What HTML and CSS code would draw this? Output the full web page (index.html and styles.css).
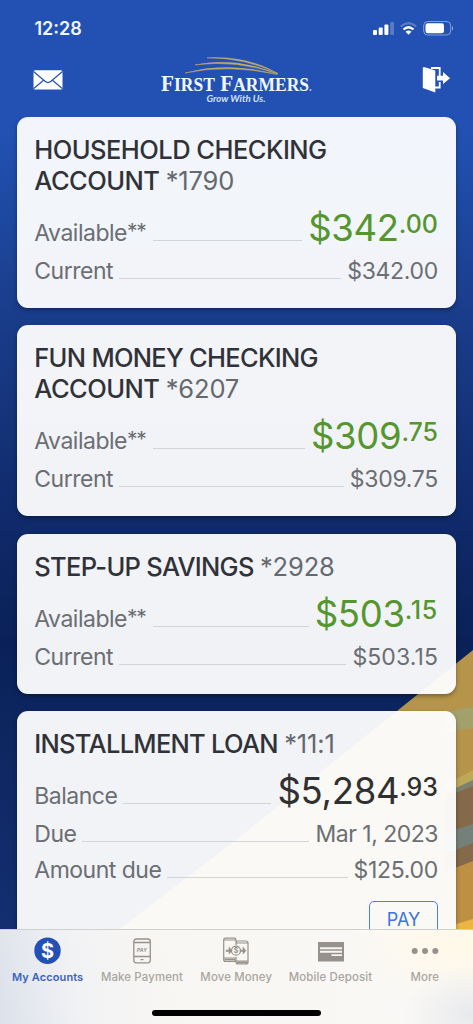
FILE: index.html
```html
<!DOCTYPE html>
<html lang="en">
<head>
<meta charset="utf-8">
<title>My Accounts</title>
<link rel="stylesheet" href="styles.css">
</head>
<body>
<div class="app">
  <svg class="backdrop" viewBox="0 0 473 929" aria-hidden="true">
    <path fill="#b6944a" d="M473 650L397 711L236 840L120 929H473Z"/>
    <path fill="#a2a16c" d="M445 713Q460 708 473 707V728Q460 729 445 732Z"/>
    <path fill="#84694a" d="M445 796Q460 788 473 783V862L445 872Z"/>
    <path fill="#7d8270" d="M445 791L473 776V786L445 797Z"/>
    <path fill="#bda858" d="M445 785L473 770V780L445 793Z"/>
    <path fill="#75807a" d="M445 833L473 824V843L445 854Z"/>
    <path fill="#bd9044" d="M445 872L473 861V929H445Z"/>
    <path fill="#ecb544" d="M440 929L473 919V929Z"/>
  </svg>

  <header class="status">
    <span class="clock">12:28</span>
    <svg class="signals" width="84" height="18" viewBox="0 0 84 18" fill="#fff">
      <rect x="1" y="10" width="4" height="5" rx="1"/>
      <rect x="6.700" y="7.500" width="4" height="7.500" rx="1"/>
      <rect x="12.400" y="4.500" width="4" height="10.500" rx="1"/>
      <rect x="18.200" y="2" width="3.800" height="13" rx="1" opacity=".25"/>
      <g fill="none" stroke="#fff" stroke-width="2.200">
        <path d="M28.700 6.500Q36.500-.3 44.300 6.500" opacity=".25"/>
        <path d="M31.500 9.500Q36.500 5 41.500 9.500"/>
      </g>
      <path d="M33.500 11.700Q36.500 9.500 39.500 11.700L36.500 14.800Z"/>
      <rect x="51.700" y="1.500" width="27" height="13.500" rx="4" fill="none" stroke="#fff" opacity=".45"/>
      <rect x="53.500" y="3.300" width="18.500" height="10" rx="2.300"/>
      <path d="M80 6Q82.500 8.300 80 10.600Z" opacity=".5"/>
    </svg>
  </header>

  <div class="brand">
    <svg width="30" height="20" viewBox="0 0 30 20">
      <rect x=".5" y=".3" width="29" height="19.200" rx="1.500" fill="#fff"/>
      <path d="M.5 1.500L12 11.300Q15 13.800 18 11.300L29.500 1.500M.8 18.500L10.500 10.300M29.200 18.500L19.500 10.300" fill="none" stroke="#2453ae" stroke-width="1.200"/>
    </svg>
    <svg class="logo" width="156" height="50" viewBox="0 0 156 50">
      <g fill="#c3ac6c" stroke="#c3ac6c" stroke-width=".5">
        <path d="M48 2.800Q88 .5 119 18.500Q86 2.800 48 2.800Z"/>
        <path d="M36 9.800Q78 2 119 19Q78 4.600 36 9.800Z"/>
        <path d="M26 18Q68 6.500 118 19.300Q69 9 26 18Z"/>
      </g>
      <text class="logo-name" x="2" y="36" textLength="148" lengthAdjust="spacingAndGlyphs"><tspan class="cap">F</tspan>IRST <tspan class="cap" dx="1.500">F</tspan>ARMERS</text>
      <circle cx="151.500" cy="35" r="1" fill="#b7c8ea"/>
      <text class="logo-tag" x="47.500" y="46.500" textLength="59" lengthAdjust="spacingAndGlyphs">Grow With Us.</text>
    </svg>
    <svg width="28" height="28" viewBox="0 0 28 28">
      <path d="M9 2H17.700V10M17.700 16V21.500H10" fill="none" stroke="#fff" stroke-width="1.800"/>
      <path d="M.8 1.300H3L13.300 4.500V26.500L.8 22Z" fill="#fff"/>
      <path d="M15 9.800H21V6L28 12.200L21 18V14.500H15Z" fill="#fff"/>
    </svg>
  </div>

  <main class="accounts">
    <section class="card">
      <h2 class="title">HOUSEHOLD CHECKING<br>ACCOUNT <span class="num">*1790</span></h2>
      <div class="row main"><span class="label">Available<span class="stars">**</span></span><i></i><span class="big green">$342<b>.00</b></span></div>
      <div class="row"><span class="label">Current</span><i></i><span>$342.00</span></div>
    </section>
    <section class="card">
      <h2 class="title"><span class="snug">FUN MONEY CHECKING</span><br>ACCOUNT <span class="num">*6207</span></h2>
      <div class="row main"><span class="label">Available<span class="stars">**</span></span><i></i><span class="big green">$309<b>.75</b></span></div>
      <div class="row"><span class="label">Current</span><i></i><span>$309.75</span></div>
    </section>
    <section class="card">
      <h2 class="title"><span class="snug">STEP-UP SAVINGS</span> <span class="num">*2928</span></h2>
      <div class="row main"><span class="label">Available<span class="stars">**</span></span><i></i><span class="big green">$503<b class="even">.15</b></span></div>
      <div class="row"><span class="label">Current</span><i></i><span class="even">$503.15</span></div>
    </section>
    <section class="card loan">
      <h2 class="title"><span class="snug">INSTALLMENT LOAN</span> <span class="num">*11:1</span></h2>
      <div class="row main"><span class="label">Balance</span><i></i><span class="big">$5,284<b>.93</b></span></div>
      <div class="row"><span class="label">Due</span><i></i><span class="label">Mar 1, 2023</span></div>
      <div class="row tight"><span class="label">Amount due</span><i></i><span>$125.00</span></div>
      <button class="pay">PAY</button>
    </section>
  </main>

  <footer class="dock">
    <nav class="tabs">
      <a class="tab active">
        <svg width="28" height="28" viewBox="0 0 28 28"><circle cx="13.500" cy="13.700" r="13.200" fill="#2350b5"/><text class="coin" x="13.500" y="20.700" text-anchor="middle">$</text></svg>
        <span>My Accounts</span>
      </a>
      <a class="tab">
        <svg width="28" height="28" viewBox="0 0 28 28" fill="none" stroke="#96918a" stroke-width="1.300"><rect x="5.800" y="2" width="16.500" height="23.800" rx="2.500"/><path d="M6 5.500H22M6 19.500H22M12.500 22.700H15.500"/><text class="mini" x="14" y="14.700" text-anchor="middle">PAY</text></svg>
        <span>Make Payment</span>
      </a>
      <a class="tab">
        <svg width="28" height="28" viewBox="0 0 28 28" fill="none" stroke="#96918a" stroke-width="1.200"><path d="M14 8V3Q14 1.200 12 1.200H3.500Q1.700 1.200 1.700 3V22.500Q1.700 24.500 3.500 24.500H12Q14 24.500 14 22V20M2 3H13.500M2 21H13.500M14 8V6Q14 4 16 4H24Q26 4 26 6V25Q26 27 24 27H16Q14 27 14 25V20M14.500 6H26M14.500 24H26"/><path d="M2.500 22.700H13M15 25.500H25" stroke-width="1.800"/><circle cx="14" cy="13.700" r="4.500"/><path d="M4 13H7V10L10 13.700L7 17V14.500H4ZM18 13H21V10L24 13.700L21 17V14.500H18Z" fill="#96918a" stroke-width=".5"/><text class="move" x="14" y="16.300" text-anchor="middle">$</text></svg>
        <span>Move Money</span>
      </a>
      <a class="tab">
        <svg width="28" height="28" viewBox="0 0 28 28"><rect x="1" y="5" width="26" height="19.500" fill="#96918a"/><path d="M3 10.300H25V12.200H3ZM3 13.800H25V15.700H3ZM14.500 17.300H25V19H14.500Z" fill="#f8f6f2"/></svg>
        <span>Mobile Deposit</span>
      </a>
      <a class="tab">
        <svg width="28" height="28" viewBox="0 0 28 28" fill="#96918a"><circle cx="3.700" cy="14" r="3"/><circle cx="14" cy="14" r="3"/><circle cx="24.300" cy="14" r="3"/></svg>
        <span>More</span>
      </a>
    </nav>
    <div class="home"></div>
  </footer>
</div>
</body>
</html>
```

FILE: styles.css
```css
* { box-sizing: border-box; }
body { margin: 0; font-family: Inter, "Liberation Sans", sans-serif; }
.app {
  position: relative;
  width: 473px;
  height: 1024px;
  overflow: hidden;
  display: flex;
  flex-direction: column;
  background: linear-gradient(#2251b3 0, #2251b3 130px, #1d489f 220px, #1a3d8b 310px, #102b6c 510px, #0a2158 640px, #0e2863 760px, #132f70 929px);
}
.backdrop { position: absolute; left: 0; top: 0; width: 473px; height: 929px; }

.status {
  height: 58px;
  flex: none;
  padding: 18px 17px 0 34.500px;
  display: flex;
  justify-content: space-between;
}
.clock { color: #f0f6ff; font-size: 18px; font-weight: 600; line-height: 22px; }
.signals { margin-top: 2px; }

.brand {
  position: relative;
  height: 59px;
  flex: none;
  padding: 0 23px 0 33px;
  display: flex;
  justify-content: space-between;
}
.brand > svg { margin-top: 12px; }
.brand > svg:last-child { margin-top: 8px; }
.brand > .logo { margin: -3px 11px 0 0; }
.logo-name { font: bold 18.5px "Liberation Serif", serif; fill: #f3f7ff; }
.logo-name .cap { font-size: 22.500px; }
.logo-tag { font: italic bold 9px Lato, sans-serif; fill: #d5e1f7; }

.accounts {
  position: relative;
  height: 812px;
  flex: none;
  overflow: hidden;
  padding: 0 17px;
  display: flex;
  flex-direction: column;
  gap: 17.500px;
}
.card {
  flex: none;
  padding: 17px 18px 22.300px 17.300px;
  border-radius: 11px;
  background: rgba(255, 255, 255, .945);
  box-shadow: 0 2px 4px rgba(0, 0, 0, .35);
  color: #6b6e73;
}
.title {
  margin: 0 0 9.700px;
  color: #303238;
  font-size: 25.500px;
  font-weight: 500;
  line-height: 31px;
  letter-spacing: -.54px;
  white-space: nowrap;
}
.snug { letter-spacing: -.72px; }
.num { color: #65686e; font-weight: 400; letter-spacing: -.15px; }
.row {
  height: 30px;
  margin-top: 6px;
  display: flex;
  align-items: baseline;
  font-size: 23px;
  line-height: 30px;
  letter-spacing: -.3px;
  white-space: nowrap;
}
.row.main { height: 44px; margin-top: 0; }
.row.tight { margin-top: 5.500px; }
.row i { flex: 1; margin: 0 6px; border-bottom: 1px solid #d2d4d8; }
.label { letter-spacing: -.5px; }
.stars { position: relative; top: -2px; font-size: 21px; line-height: 20px; letter-spacing: -1.200px; margin-right: 1px; }
.row .even { letter-spacing: .1px; }
.big { color: #303030; font-size: 36.500px; line-height: 44px; letter-spacing: -.3px; }
.big b { position: relative; top: -8px; font-size: 25px; font-weight: 500; line-height: 20px; letter-spacing: 0; }
.big .even { letter-spacing: .7px; }
.green { color: #55962f; }
.loan { display: flex; flex-direction: column; height: 240px; }
.pay {
  align-self: flex-end;
  width: 69px;
  height: 38px;
  flex: none;
  margin-top: 16.500px;
  padding: 0;
  border: 1px solid #4a80e4;
  border-radius: 5px;
  background: transparent;
  color: #3c74e0;
  font: 18px/32px Inter, sans-serif;
}

.dock {
  position: relative;
  flex: 1;
  border-top: 1px solid #cfcfd0;
  background:
    radial-gradient(ellipse 70px 50px at 100% 90%, #e8e9ec, transparent),
    radial-gradient(ellipse 130px 60px at 100% 15%, #fff9e6, transparent),
    linear-gradient(80deg, #dce1eb 0, #f1f2f4 17%, #f8f6f3 35%, #faf9f7 100%);
}
.tabs { display: grid; grid-template-columns: repeat(5, 94.300px); padding-left: .5px; }
.tab { display: flex; flex-direction: column; align-items: center; padding-top: 7px; color: #a9a59f; font-size: 11.400px; font-weight: 500; line-height: 16px; letter-spacing: .15px; white-space: nowrap; }
.tab span { margin-top: 4px; }
.tab.active { color: #3b63bd; font-weight: 600; font-size: 11px; letter-spacing: .1px; }
.coin { font: bold 20px Inter, sans-serif; fill: #fff; }
.mini { font: italic bold 5px Inter, sans-serif; fill: #96918a; stroke: none; }
.move { font: bold 7px Inter, sans-serif; fill: #96918a; stroke: none; }
.home { width: 169px; height: 6px; margin: 25px auto 0; border-radius: 3px; background: #000; }
```
